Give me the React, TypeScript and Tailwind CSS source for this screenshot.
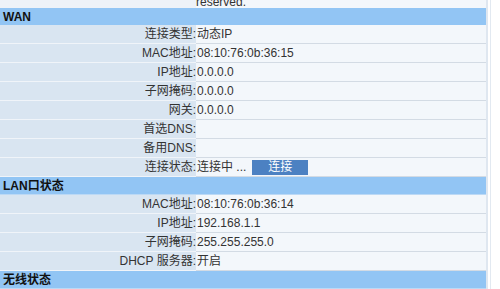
import React from 'react';

type Row = { label: string; value?: string; action?: boolean };

const wanRows: Row[] = [
    { label: '连接类型:', value: '动态IP' },
    { label: 'MAC地址:', value: '08:10:76:0b:36:15' },
    { label: 'IP地址:', value: '0.0.0.0' },
    { label: '子网掩码:', value: '0.0.0.0' },
    { label: '网关:', value: '0.0.0.0' },
    { label: '首选DNS:', value: '' },
    { label: '备用DNS:', value: '' },
    { label: '连接状态:', value: '连接中 ...', action: true },
];

const lanRows: Row[] = [
    { label: 'MAC地址:', value: '08:10:76:0b:36:14' },
    { label: 'IP地址:', value: '192.168.1.1' },
    { label: '子网掩码:', value: '255.255.255.0' },
    { label: 'DHCP 服务器:', value: '开启' },
];

const font = { fontFamily: 'Tahoma, "Liberation Sans", "Noto Sans CJK SC", sans-serif' };

const SectionHeader = ({ title }: { title: string }) => (
    <div className="flex items-center h-[18px] px-[3px] bg-[#92c5f4] text-[12px] font-bold text-[#111] border-b border-[#bcd9f5]">
        {title}
    </div>
);

const InfoRow = ({ row }: { row: Row }) => (
    <div className="flex h-[19.25px] text-[12px] text-[#333]">
        <div className="w-[196px] shrink-0 flex items-center justify-end bg-[#d9e5f1] border-b border-[#f0f4f9]">
            {row.label}
        </div>
        <div className="flex-1 flex items-center bg-[#f3f7fb] border-b border-[#d3dbe4] pl-[1px]">
            {row.value}
            {row.action && (
                <button className="ml-[6px] w-[56px] h-[15px] bg-[#4c81c2] text-white text-[12px] leading-none flex items-center justify-center">
                    连接
                </button>
            )}
        </div>
    </div>
);

const App = () => {
    return (
        <div className="w-[500px] h-[289px] overflow-hidden flex bg-white" style={font}>
            <div className="w-[486px] flex flex-col">
                {/* tail of the copyright row */}
                <div className="h-[8px] shrink-0 flex overflow-hidden">
                    <div className="w-[196px] bg-[#edf2f8]"></div>
                    <div className="flex-1 bg-[#f3f7fb] flex items-end text-[12px] text-[#333] leading-[12px]">
                        reserved.
                    </div>
                </div>
                <div className="h-[17px] shrink-0 flex items-center px-[3px] bg-[#92c5f4] text-[12px] font-bold text-[#111]">
                    WAN
                </div>
                {wanRows.map((row, index) => (
                    <InfoRow key={index} row={row} />
                ))}
                <SectionHeader title="LAN口状态" />
                {lanRows.map((row, index) => (
                    <InfoRow key={index} row={row} />
                ))}
                <SectionHeader title="无线状态" />
            </div>
            <div className="w-[2px] bg-[#dfe7f0]"></div>
            <div className="w-[2px] bg-white"></div>
            <div className="w-[1px] bg-[#e2e9f1]"></div>
            <div className="flex-1 bg-white"></div>
        </div>
    );
};

export default App;
